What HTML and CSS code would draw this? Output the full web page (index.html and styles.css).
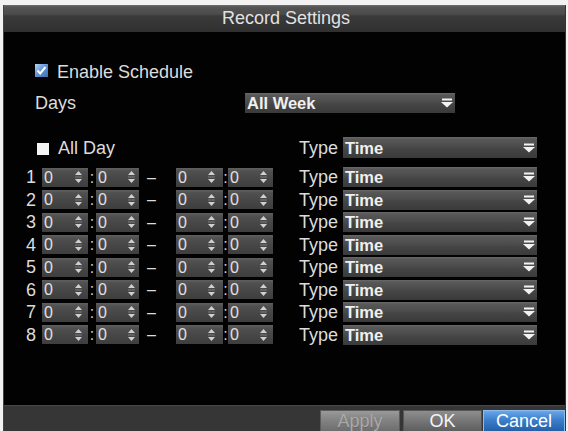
FILE: index.html
```html
<!DOCTYPE html>
<html>
<head>
<meta charset="utf-8">
<link rel="stylesheet" href="styles.css">
</head>
<body>
<div class="screen">
  <div class="titlebar">Record Settings</div>
  <div class="content">
    <div class="enable-row">
      <svg class="chk-on" width="13" height="13" viewBox="0 0 13 13"><defs><linearGradient id="cb" x1="0" y1="0" x2="1" y2="1"><stop offset="0" stop-color="#b8d4f4"/><stop offset="0.5" stop-color="#5e92d6"/><stop offset="1" stop-color="#3b6fb8"/></linearGradient></defs><rect x="0" y="0" width="13" height="13" fill="url(#cb)"/><path d="M2.5 6.5 L5.2 9.5 L10.5 3" fill="none" stroke="#ffffff" stroke-width="2"/></svg>
      <span class="label">Enable Schedule</span>
    </div>
    <div class="days-row">
      <span class="label days-label">Days</span>
      <div class="select days-select"><span class="sel-text">All Week</span><svg class="arrow" width="12" height="10" viewBox="0 0 12 10"><rect x="1" y="0.5" width="10" height="2" fill="#f2f2f2"/><polygon points="0,4 12,4 6,9.5" fill="#f2f2f2"/></svg></div>
    </div>
    <div class="allday-row">
      <div class="allday-left"><span class="chk-off"></span><span class="label">All Day</span></div>
      <span class="label type-label">Type</span>
      <div class="select type-select"><span class="sel-text">Time</span><svg class="arrow" width="12" height="10" viewBox="0 0 12 10"><rect x="1" y="0.5" width="10" height="2" fill="#f2f2f2"/><polygon points="0,4 12,4 6,9.5" fill="#f2f2f2"/></svg></div>
    </div>
    <div class="periods" id="periods"></div>
  </div>
  <div class="footer">
    <span class="btn btn-apply">Apply</span>
    <span class="btn btn-ok">OK</span>
    <span class="btn btn-cancel">Cancel</span>
  </div>
</div>
<script>
  var spin = '<svg class="spin" width="9" height="16" viewBox="0 0 9 16"><polygon points="1,6 4.5,2 8,6" fill="#d0d0d0"/><rect x="1" y="7.5" width="7" height="1" fill="#7a7a7a"/><polygon points="1,10 8,10 4.5,14" fill="#d0d0d0"/></svg>';
  var arrow = '<svg class="arrow" width="12" height="10" viewBox="0 0 12 10"><rect x="1" y="0.5" width="10" height="2" fill="#f2f2f2"/><polygon points="0,4 12,4 6,9.5" fill="#f2f2f2"/></svg>';
  var html = '';
  for (var i = 1; i <= 8; i++) {
    html += '<div class="period">' +
      '<span class="num">' + i + '</span>' +
      '<span class="box b1"><span class="val">0</span>' + spin + '</span>' +
      '<span class="colon c1">:</span>' +
      '<span class="box b2"><span class="val">0</span>' + spin + '</span>' +
      '<span class="dash">–</span>' +
      '<span class="box b3"><span class="val">0</span>' + spin + '</span>' +
      '<span class="colon c2">:</span>' +
      '<span class="box b4"><span class="val">0</span>' + spin + '</span>' +
      '<span class="label type-label">Type</span>' +
      '<div class="select type-select"><span class="sel-text">Time</span>' + arrow + '</div>' +
      '</div>';
  }
  document.getElementById('periods').innerHTML = html;
</script>
</body>
</html>
```
FILE: styles.css
```css
html, body {
  margin: 0;
  padding: 0;
  background: #f2f2f2;
  overflow: hidden;
}
body {
  width: 568px;
  height: 431px;
  font-family: "Liberation Sans", Arial, sans-serif;
}
.screen {
  margin: 5px 2px 0 3px;
  height: 426px;
  background: #020202;
  border-left: 1px solid #444;
  border-right: 1px solid #333;
  display: flex;
  flex-direction: column;
  box-sizing: border-box;
}
.titlebar {
  height: 27px;
  flex: none;
  background: linear-gradient(to bottom, #707070 0, #545454 2px, #4c4c4c 9px, #3a3a3a 11px, #303030 100%);
  color: #e2e2e2;
  font-size: 18px;
  line-height: 27px;
  text-align: center;
  padding-left: 3px;
}
.content {
  flex: 1;
  padding-top: 30px;
}
.label {
  color: #dcdcdc;
  font-size: 18px;
  line-height: 20px;
}
.enable-row {
  display: flex;
  align-items: center;
  height: 20px;
  padding-left: 31px;
}
.chk-on {
  display: block;
  margin-right: 9px;
  margin-top: -3px;
}
.days-row {
  display: flex;
  align-items: center;
  height: 20px;
  margin-top: 11px;
  padding-left: 31px;
}
.days-label {
  width: 210px;
}
.select {
  height: 20px;
  display: flex;
  align-items: center;
  justify-content: space-between;
  background: linear-gradient(to bottom, #6a6a6a 0, #585858 2px, #4e4e4e 8px, #444 12px, #3a3a3a 100%);
  box-sizing: border-box;
  padding: 0 2px 0 2px;
}
.sel-text {
  color: #f0f0f0;
  font-size: 16.5px;
  font-weight: bold;
  line-height: 20px;
}
.arrow {
  display: block;
}
.days-select {
  width: 210px;
}
.allday-row {
  display: flex;
  align-items: center;
  height: 21px;
  margin-top: 24px;
  padding-left: 22px;
}
.allday-left {
  width: 273px;
  display: flex;
  align-items: center;
  padding-left: 11px;
  box-sizing: border-box;
}
.chk-off {
  width: 12px;
  height: 12px;
  background: #f4f4f4;
  margin-right: 9px;
  margin-top: 2px;
}
.type-label {
  width: 44px;
}
.type-select {
  width: 194px;
}
.allday-row .type-select {
  height: 21px;
}
.periods {
  margin-top: 9px;
}
.period {
  display: flex;
  align-items: center;
  height: 20px;
  margin-bottom: 2.5px;
  padding-left: 22px;
}
.num {
  width: 16px;
  color: #dcdcdc;
  font-size: 18px;
  line-height: 20px;
}
.box {
  height: 19px;
  display: flex;
  align-items: center;
  justify-content: space-between;
  box-sizing: border-box;
  padding: 0 5px 0 2px;
  background: linear-gradient(to bottom, #606060 0, #505050 3px, #474747 10px, #3e3e3e 100%);
}
.val {
  color: #e0e0e0;
  font-size: 16px;
  line-height: 19px;
}
.spin {
  display: block;
}
.b1 { width: 46px; }
.b2 { width: 43px; padding-right: 3px; }
.b3 { width: 47px; padding-right: 7px; }
.b4 { width: 45px; }
.colon {
  color: #cfcfcf;
  font-size: 16px;
  line-height: 19px;
  text-align: center;
}
.c1 { width: 8px; }
.c2 { width: 5px; }
.dash {
  width: 37px;
  box-sizing: border-box;
  padding-left: 8px;
  color: #dcdcdc;
  font-size: 16px;
  line-height: 19px;
}
.b4 { margin-right: 26px; }
.footer {
  height: 26px;
  flex: none;
  background: #363636;
  border-top: 1px solid #474747;
  box-sizing: border-box;
  display: flex;
  justify-content: flex-end;
  align-items: flex-start;
  padding-top: 4px;
  overflow: hidden;
}
.btn {
  display: block;
  height: 21px;
  box-sizing: border-box;
  font-size: 18px;
  line-height: 20px;
  text-align: center;
}
.btn-apply {
  width: 80px;
  margin-right: 3px;
  background: linear-gradient(to bottom, #9a9a9a 0, #858585 40%, #6e6e6e 100%);
  border: 1px solid #5a5a5a;
  border-bottom: 0;
  color: #a9a9a9;
  text-shadow: 0 1px 0 #6a6a6a;
}
.btn-ok {
  width: 79px;
  margin-right: 1px;
  background: linear-gradient(to bottom, #8e8e8e 0, #7a7a7a 40%, #5e5e5e 100%);
  border: 1px solid #555;
  border-bottom: 0;
  color: #f4f4f4;
}
.btn-cancel {
  width: 82px;
  background: linear-gradient(to bottom, #6aa6e8 0, #3c7fcc 45%, #2460a8 100%);
  border: 1px solid #8cbdf0;
  border-bottom: 0;
  color: #ffffff;
}
```
